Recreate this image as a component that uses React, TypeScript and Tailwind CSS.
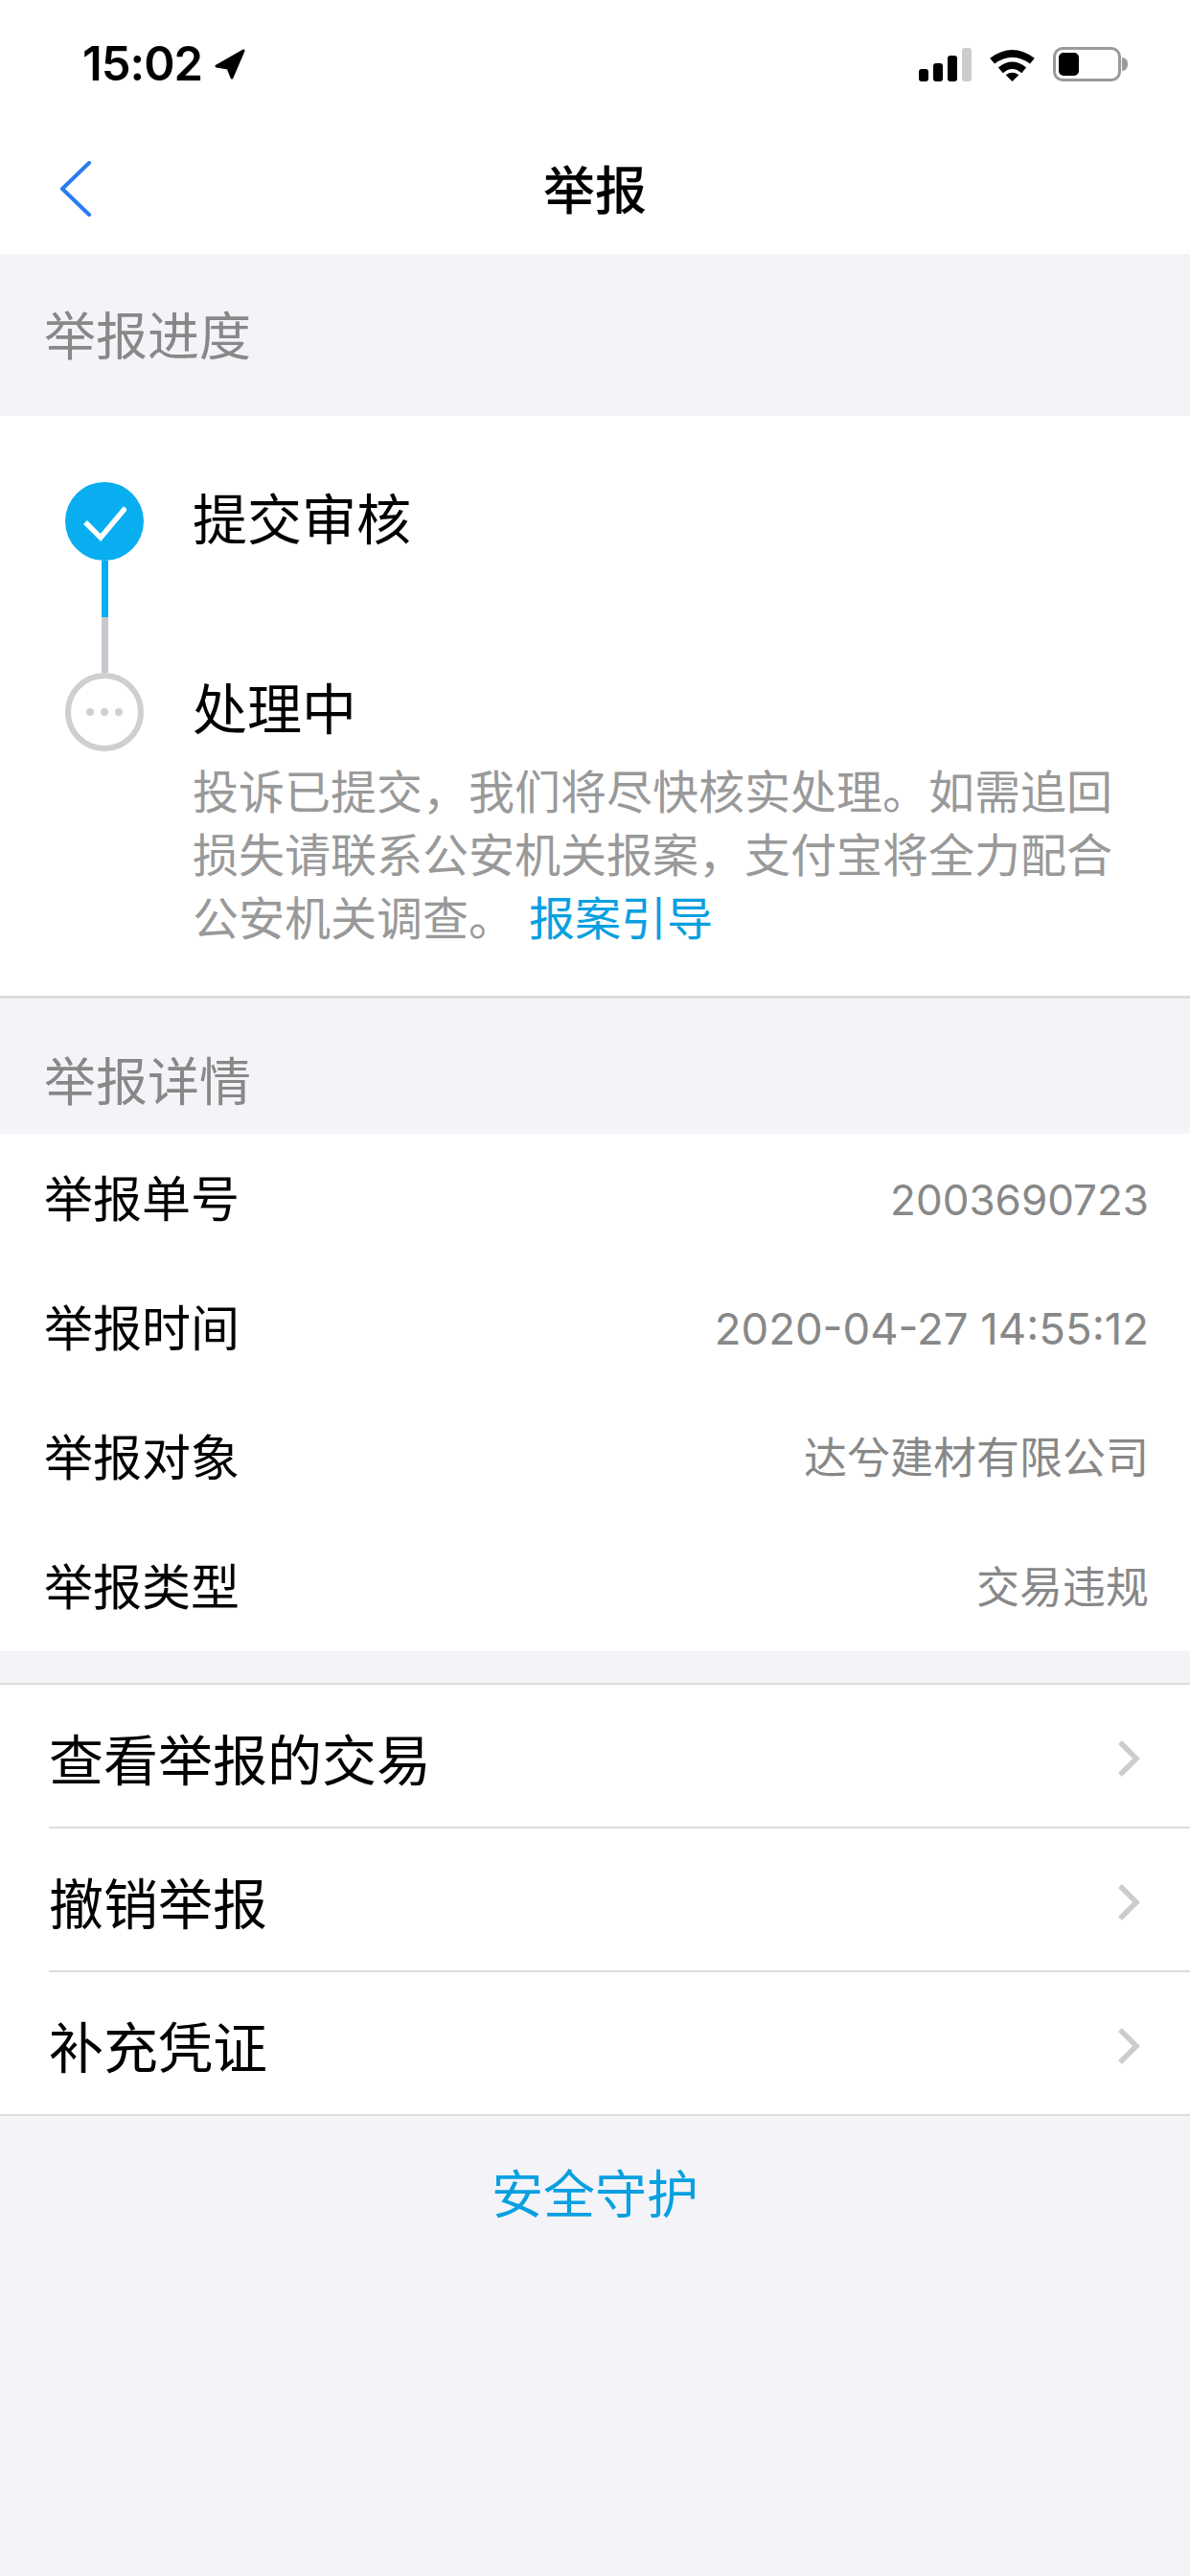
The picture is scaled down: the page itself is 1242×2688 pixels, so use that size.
const cjk = "font-['Inter','Noto_Sans_CJK_SC',sans-serif]";

const details = [
  { label: "举报单号", value: "2003690723", size: "text-[44px]" },
  { label: "举报时间", value: "2020-04-27 14:55:12", size: "text-[45.5px]" },
  { label: "举报对象", value: "达兮建材有限公司", size: "text-[45px]" },
  { label: "举报类型", value: "交易违规", size: "text-[45px]" },
];

const links = ["查看举报的交易", "撤销举报", "补充凭证"];

function StatusBar() {
  return (
    <div className="h-[133px] flex items-start justify-between pt-[49px] pl-[86px] pr-[65px]">
      <div className="flex items-center gap-[13px] h-[36px]">
        <span className="text-[49px] leading-[36px] font-semibold text-black font-['Inter',sans-serif] tracking-[-1px]">15:02</span>
        <svg width="32" height="32" viewBox="0 0 32 32">
          <path d="M30 2 L2 18 L14 20 L18 30 Z" fill="#000" stroke="#000" strokeWidth="3" strokeLinejoin="round" />
        </svg>
      </div>
      <div className="flex items-center gap-[19px] h-[36px]">
        <div className="flex items-end gap-[5px] h-[35px]">
          <div className="w-[10px] h-[13px] rounded-[3px] bg-black" />
          <div className="w-[10px] h-[19px] rounded-[3px] bg-black" />
          <div className="w-[10px] h-[27px] rounded-[3px] bg-black" />
          <div className="w-[10px] h-[35px] rounded-[3px] bg-[#cccccc]" />
        </div>
        <svg width="47" height="35" viewBox="0 0 48 36">
          <path d="M0 11 Q24 -7 48 11 L43 17 Q24 3 5 17 Z" fill="#000" />
          <path d="M9 21 Q24 9 39 21 L34 27 Q24 18 14 27 Z" fill="#000" />
          <path d="M17 29 Q24 24 31 29 L24 36 Z" fill="#000" />
        </svg>
        <div className="flex items-center">
          <div className="w-[71px] h-[36px] rounded-[10px] border-[3px] border-[#9a9a9a] p-[3px] bg-white">
            <div className="w-[21px] h-full rounded-[5px] bg-black" />
          </div>
          <div className="w-[6px] h-[14px] ml-[1px] rounded-r-[6px] bg-[#9a9a9a]" />
        </div>
      </div>
    </div>
  );
}

function NavBar() {
  return (
    <div className="h-[132px] relative flex items-center justify-center">
      <svg className="absolute left-[60px] top-[35px]" width="38" height="58" viewBox="0 0 38 58">
        <path d="M33 2 L5 29 L33 56" fill="none" stroke="#2a7cf0" strokeWidth="4" strokeLinecap="round" strokeLinejoin="round" />
      </svg>
      <span className="text-[54px] font-medium text-black">举报</span>
    </div>
  );
}

function SectionTitle({ children, className }: { children: string; className: string }) {
  return (
    <div className={`${className} pl-[46px] flex items-center text-[54px] text-[#888888]`}>{children}</div>
  );
}

function Progress() {
  return (
    <div className="bg-white h-[608px] border-b-[3px] border-[#dddddd] pt-[69px] pl-[68px] flex gap-[51px]">
      <div className="flex flex-col items-center w-[82px]">
        <div className="w-[82px] h-[82px] rounded-full bg-[#08aef0] flex items-center justify-center">
          <svg width="46" height="44" viewBox="0 0 46 44">
            <path d="M3 23 L19 39 L45 8" fill="none" stroke="#fff" strokeWidth="5.5" />
          </svg>
        </div>
        <div className="w-[7px] h-[59px] bg-[#08aef0]" />
        <div className="w-[7px] h-[58px] bg-[#c8c8ce]" />
        <div className="w-[82px] h-[82px] rounded-full border-[6px] border-[#cfcfcf] flex items-center justify-center gap-[7px]">
          <div className="w-[8px] h-[8px] rounded-full bg-[#cfcfcf]" />
          <div className="w-[8px] h-[8px] rounded-full bg-[#cfcfcf]" />
          <div className="w-[8px] h-[8px] rounded-full bg-[#cfcfcf]" />
        </div>
      </div>
      <div className="flex-1 pr-[60px] -mt-[2px]">
        <div className="text-[57px] leading-[84px] text-black">提交审核</div>
        <div className="text-[57px] leading-[84px] text-black mt-[114px]">处理中</div>
        <div className="text-[48px] leading-[66px] text-[#999999] mt-[11px]">
          投诉已提交，我们将尽快核实处理。如需追回损失请联系公安机关报案，支付宝将全力配合公安机关调查。
          <span className="text-[#08a0e0] ml-[15px]">报案引导</span>
        </div>
      </div>
    </div>
  );
}

function Details() {
  return (
    <div className="bg-white flex flex-col">
      {details.map((d) => (
        <div key={d.label} className="h-[135px] pt-[3px] flex items-center justify-between pl-[46px] pr-[43px]">
          <span className="text-[51px] text-black">{d.label}</span>
          <span className={`${d.size} text-[#888888]`}>{d.value}</span>
        </div>
      ))}
    </div>
  );
}

function Chevron() {
  return (
    <svg width="24" height="38" viewBox="0 0 24 38">
      <path d="M3 2 L20 19 L3 36" fill="none" stroke="#cccccc" strokeWidth="5.5" />
    </svg>
  );
}

function Links() {
  return (
    <div className="bg-white border-t-[2px] border-[#dddddd] border-b-[2px]">
      {links.map((l, i) => (
        <div
          key={l}
          className={`ml-[51px] pt-[6px] pr-[52px] flex items-center justify-between ${
            i < 2 ? "h-[150px] border-b-[2px] border-[#dddddd]" : "h-[148px]"
          }`}
        >
          <span className="text-[57px] mt-[5px] text-black">{l}</span>
          <Chevron />
        </div>
      ))}
    </div>
  );
}

export default function App() {
  return (
    <div className={`w-[1242px] h-[2688px] overflow-hidden bg-[#f3f3f8] ${cjk}`}>
      <div className="bg-white">
        <StatusBar />
        <NavBar />
      </div>
      <SectionTitle className="h-[169px] pt-[4px]">举报进度</SectionTitle>
      <Progress />
      <SectionTitle className="h-[141px] pt-[34px]">举报详情</SectionTitle>
      <Details />
      <div className="h-[33px]" />
      <Links />
      <div className="h-[165px] flex items-center justify-center text-[54px] text-[#08a0e0]">安全守护</div>
    </div>
  );
}
